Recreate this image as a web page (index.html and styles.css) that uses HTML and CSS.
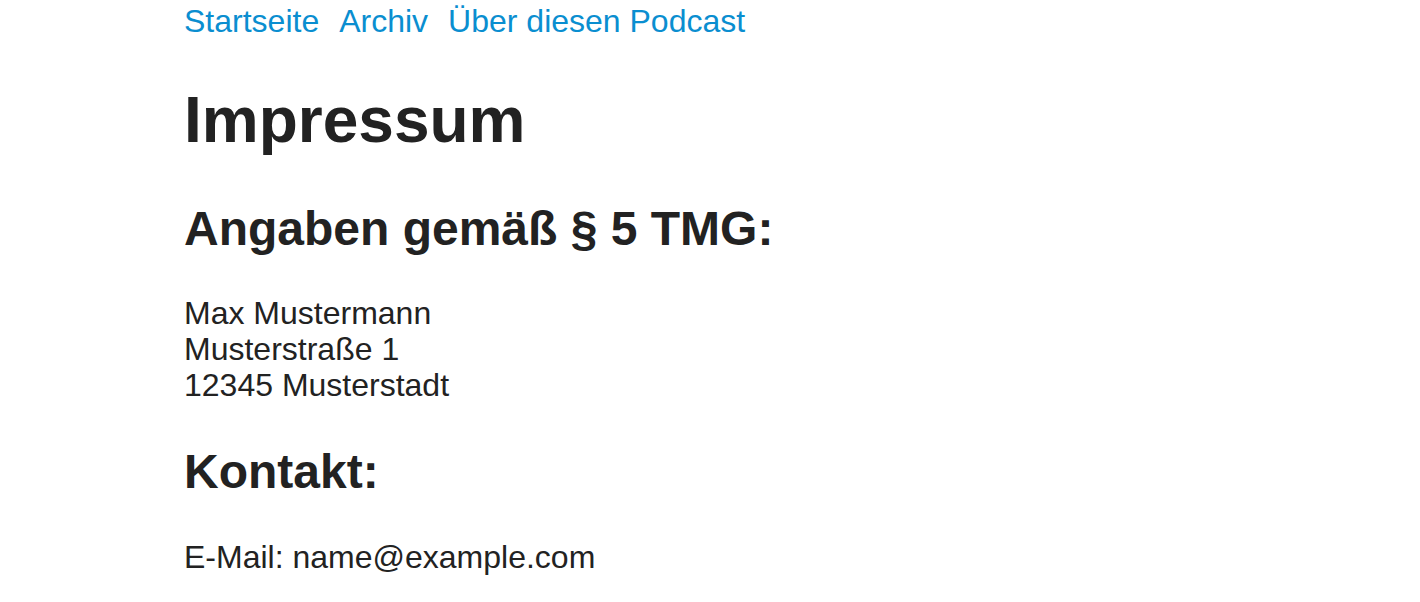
FILE: index.html
```html
<!DOCTYPE html>
<html lang="de">
<head>
<meta charset="utf-8">
<title>Impressum</title>
<link rel="stylesheet" href="styles.css">
</head>
<body>
<div class="page">
  <nav class="nav">
    <a href="#">Startseite</a>
    <a href="#">Archiv</a>
    <a href="#">Über diesen Podcast</a>
  </nav>
  <main class="content">
    <h1 class="title">Impressum</h1>
    <h2 class="section">Angaben gemäß § 5 TMG:</h2>
    <p class="text">Max Mustermann<br>Musterstraße 1<br>12345 Musterstadt</p>
    <h2 class="section section-contact">Kontakt:</h2>
    <p class="text text-contact">E-Mail: name@example.com</p>
  </main>
</div>
</body>
</html>
```
FILE: styles.css
```css
html, body {
  margin: 0;
  padding: 0;
  background: #ffffff;
}
body {
  font-family: "Liberation Sans", Arial, Helvetica, sans-serif;
  font-size: 32px;
  line-height: 36px;
  color: #222222;
}
.page {
  width: 1052px;
  margin: 0 auto;
}
.nav {
  display: flex;
  gap: 20px;
  padding-top: 3px;
  height: 36px;
}
.nav a {
  color: #0a8ed0;
  text-decoration: none;
}
.content {
  display: flex;
  flex-direction: column;
}
.title {
  margin: 45px 0 0;
  font-size: 64px;
  line-height: 72px;
  font-weight: bold;
  color: #222222;
}
.section {
  margin: 46px 0 0;
  font-size: 48px;
  line-height: 54px;
  font-weight: bold;
  color: #222222;
}
.section-contact {
  margin-top: 42px;
}
.text {
  margin: 39px 0 0;
}
.text-contact {
  margin-top: 40px;
}
```
